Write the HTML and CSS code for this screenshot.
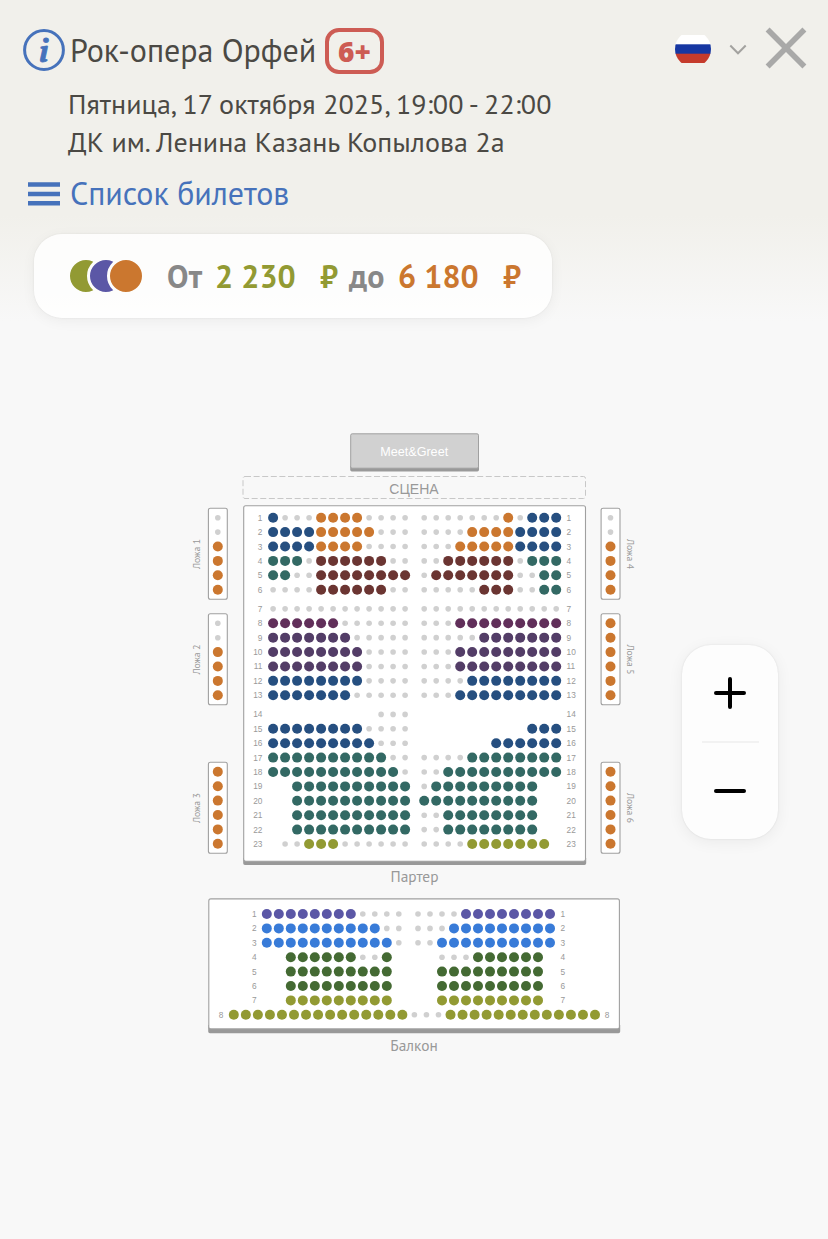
FILE: index.html
```html
<!DOCTYPE html>
<html lang="ru">
<head>
    <meta charset="UTF-8">
    <title>Рок-опера Орфей</title>
    <link rel="stylesheet" href="styles.css">
</head>
<body>

<!-- Шапка -->
<header class="header">
    <div class="title-row">
        <svg class="info-icon" width="42" height="42" viewBox="0 0 42 42">
            <circle cx="21" cy="21" r="19.4"/>
            <text x="20.8" y="33" text-anchor="middle">i</text>
        </svg>
        <h1 class="title">Рок-опера Орфей</h1>
        <span class="age">6+</span>
        <div class="tools">
            <svg class="flag" width="36" height="28" viewBox="0 0 36 28">
                <clipPath id="flagClip"><circle cx="18" cy="14" r="18"/></clipPath>
                <g clip-path="url(#flagClip)">
                    <rect width="36" height="10" fill="#fff"/>
                    <rect y="9.3" width="36" height="9.7" fill="#1637a2"/>
                    <rect y="18.7" width="36" height="9.3" fill="#c53b2c"/>
                </g>
            </svg>
            <svg class="chevron" width="18" height="12" viewBox="0 0 18 12">
                <path d="M1.3 1.5 L9 9.3 L16.7 1.5"/>
            </svg>
            <svg class="close" width="42" height="42" viewBox="0 0 42 42">
                <path d="M2.6 2.6 L39.4 39.4 M39.4 2.6 L2.6 39.4"/>
            </svg>
        </div>
    </div>
    <div class="details">
        <p>Пятница, 17 октября 2025, 19:00 - 22:00</p>
        <p>ДК им. Ленина Казань Копылова 2а</p>
    </div>
    <a class="tickets">
        <svg width="32" height="24" viewBox="0 0 32 24">
            <path d="M0 2.5 H32 M0 12 H32 M0 21.3 H32"/>
        </svg>
        <span>Список билетов</span>
    </a>
</header>

<!-- Диапазон цен -->
<div class="prices">
    <div class="dots">
        <i class="dot olive"></i>
        <i class="dot violet"></i>
        <i class="dot orange"></i>
    </div>
    <span class="word from">От</span>
    <span class="min">2 230</span>
    <span class="min rub">₽</span>
    <span class="word to">до</span>
    <span class="max">6 180</span>
    <span class="max rub">₽</span>
</div>

<!-- Схема зала -->
<main class="hall">
    <svg id="map" class="map" width="450" height="640" viewBox="190 425 450 640">
        <path class="shadow" d="M350.2 466 h128.8 v3.8 q0 1.7 -1.7 1.7 h-125.4 q-1.7 0 -1.7 -1.7 z"/>
        <rect class="meet" x="350.7" y="433.8" width="127.8" height="34.4" rx="1.5"/>
        <text class="meet-text" x="414.2" y="455.7">Meet&amp;Greet</text>
        <rect class="stage" x="243" y="476.5" width="342.5" height="22" rx="2"/>
        <text class="stage-text" x="414" y="494">СЦЕНА</text>

        <path class="shadow" d="M243.2 858 h343 v5.2 q0 1.8 -1.8 1.8 h-339.4 q-1.8 0 -1.8 -1.8 z"/>
        <rect class="box" x="243.7" y="505.7" width="341.8" height="355.5" rx="2"/>
        <text class="zone" x="414.5" y="882" textLength="48" lengthAdjust="spacingAndGlyphs">Партер</text>

        <path class="shadow" d="M208.2 1025 h412 v6.4 q0 1.8 -1.8 1.8 h-408.4 q-1.8 0 -1.8 -1.8 z"/>
        <rect class="box" x="208.8" y="898.9" width="410.6" height="130" rx="2"/>
        <text class="zone" x="414" y="1050.5" textLength="47.5" lengthAdjust="spacingAndGlyphs">Балкон</text>
    </svg>

    <!-- Масштаб -->
    <div class="zoom">
        <svg width="32" height="32" viewBox="0 0 32 32"><path d="M2 16 H30 M16 2 V30"/></svg>
        <hr>
        <svg width="32" height="32" viewBox="0 0 32 32"><path d="M2 16 H30"/></svg>
    </div>
</main>

<script src="script.js"></script>
</body>
</html>
```
FILE: styles.css
```css
* {
    box-sizing: border-box;
}

body {
    margin: 0;
    min-height: 1239px;
    font-family: "PT Sans", "Noto Sans", sans-serif;
    color: #4b4944;
    background: linear-gradient(#f1f0eb 0, #f1f0eb 215px, #f8f8f8 322px);
}

h1, p {
    margin: 0;
    font-weight: 400;
}

.header {
    height: 234px;
    padding: 28px 21px 0 23px;
}

.title-row {
    display: flex;
    align-items: center;
    height: 46px;
}

.info-icon {
    margin-top: -2px;
}

.info-icon circle {
    fill: none;
    stroke: #4672bb;
    stroke-width: 3;
}

.info-icon text {
    font: italic bold 31px "PT Serif", "DejaVu Serif", serif;
    fill: #4672bb;
    stroke: #4672bb;
    stroke-width: .8;
}

.title {
    width: 260px;
    margin-top: -2px;
    padding-left: 5px;
    font-size: 32px;
    line-height: 44px;
    letter-spacing: -.05px;
    white-space: nowrap;
}

.age {
    width: 59px;
    height: 46px;
    border: 4px solid #cd5c54;
    border-radius: 14px;
    color: #cd5c54;
    font: 800 28px/39px "Open Sans", sans-serif;
    text-align: center;
}

.tools {
    display: flex;
    align-items: center;
    margin-left: auto;
    margin-top: -6px;
}

.flag {
    margin-top: 2px;
}

.chevron {
    margin: 3px 18px 0 18px;
    fill: none;
    stroke: #a3a29f;
    stroke-width: 2;
}

.close {
    fill: none;
    stroke: #a9a9a8;
    stroke-width: 5.6;
}

.details {
    padding: 11px 0 0 45px;
    font-size: 28px;
    line-height: 38px;
    letter-spacing: .04px;
    white-space: nowrap;
}

.tickets {
    display: flex;
    align-items: center;
    gap: 10px;
    padding-left: 5px;
    height: 64px;
    color: #4672bb;
    font-size: 32px;
    line-height: 42px;
    letter-spacing: -.05px;
    white-space: nowrap;
}

.tickets svg {
    margin-top: 2px;
    stroke: #4672bb;
    stroke-width: 4.6;
}

.prices {
    display: flex;
    align-items: center;
    width: 518px;
    height: 84px;
    margin-left: 34px;
    padding-left: 33px;
    border-radius: 28px;
    background: rgba(255, 255, 255, .8);
    box-shadow: 0 0 2px rgba(0, 0, 0, .08), 0 3px 14px rgba(0, 0, 0, .05);
    font-size: 32px;
    font-weight: 700;
    white-space: nowrap;
}

.dots {
    display: flex;
    width: 100px;
}

.dot {
    flex: none;
    width: 38px;
    height: 38px;
    margin-right: -18px;
    border: 3px solid #fdfdfc;
    border-radius: 50%;
}

.word {
    color: #888;
}

.from {
    width: 48px;
}

.min {
    width: 105px;
    color: #929a33;
}

.max {
    width: 105px;
    color: #cb772f;
}

.prices .rub {
    width: 29px;
}

.to {
    width: 49px;
}

.olive {
    background: #929a33;
}

.violet {
    background: #5b57a6;
}

.orange {
    background: #cb772f;
}

.hall {
    display: flex;
    align-items: flex-start;
    padding: 107px 0 0 190px;
}

.map {
    flex: none;
    font-family: "Liberation Sans", Arial, sans-serif;
}

.map text {
    text-anchor: middle;
    fill: #999;
}

.box {
    fill: #fff;
    stroke: #a0a0a0;
    stroke-width: 1.1;
}

.shadow {
    fill: #999;
}

.meet {
    fill: #d1d1d1;
    stroke: #a0a0a0;
}

.map .meet-text {
    font-size: 12.6px;
    fill: #fff;
}

.stage {
    fill: none;
    stroke: #c8c8c8;
    stroke-dasharray: 6 2.6;
}

.map .stage-text {
    font-size: 14px;
}

.map .zone {
    font: 14.4px "PT Sans", "Noto Sans", sans-serif;
}

.map .loge {
    font: 9.5px "PT Sans", "Noto Sans", sans-serif;
}

.map .row {
    font-size: 8.3px;
}

.map .row-left {
    text-anchor: end;
}

.map .row-right {
    text-anchor: start;
}

.zoom {
    display: flex;
    flex-direction: column;
    align-items: center;
    justify-content: space-between;
    width: 96px;
    height: 194px;
    margin: 220px 0 0 42px;
    padding: 32px 0;
    border-radius: 29px;
    background: #fdfdfd;
    box-shadow: 0 0 2px rgba(0, 0, 0, .1), 0 3px 16px rgba(0, 0, 0, .06);
}

.zoom svg {
    stroke: #000;
    stroke-width: 4;
    stroke-linecap: round;
}

.zoom hr {
    width: 57px;
    margin: 0;
    border: 0;
    border-top: 2px solid #f2f2f2;
}
```
FILE: script.js
```js
const NS = "http://www.w3.org/2000/svg";
const map = document.getElementById("map");

// o - место занято, точка - пропуск
const colors = {
    o: "#d0d0d0",
    a: "#cb772f",
    b: "#264f80",
    t: "#336964",
    m: "#6b3532",
    w: "#612f5a",
    p: "#533d67",
    g: "#929a33",
    v: "#5b57a6",
    s: "#387bd8",
    f: "#446a33"
};

function add(tag, attrs, text) {
    const el = document.createElementNS(NS, tag);
    for (const key in attrs) el.setAttribute(key, attrs[key]);
    if (text) el.textContent = text;
    map.appendChild(el);
}

function seat(type, x, y) {
    if (type === ".") return;
    add("circle", { cx: x, cy: y, r: type === "o" ? 2.8 : 5, fill: colors[type] });
}

function seats(row, x, y, step) {
    [...row].forEach((type, i) => seat(type, x + i * step, y));
}

// Партер
const parterre = [
    ["boooaaaaoooo", "oooooooaobbb"],
    ["bbbbaaaaaooo", "ooooaaaabbbb"],
    ["bbbbaaaaoooo", "oooaaaaabbbb"],
    ["tttommmmmmoo", "oommmmmmottt"],
    ["ttoommmmmmmm", "ommmmmmmoott"],
    ["oooommmmmmoo", "ooooommmoott"],
    ["oooooooooooo", "oooooooooooo"],
    ["wwwwwwoooooo", "ooowwwwwwwww"],
    ["pppppppooooo", "oooooppppppp"],
    ["ppppppppoooo", "oooppppppppp"],
    ["ppppppppoooo", "oooppppppppp"],
    ["bbbbbbbboooo", "oooobbbbbbbb"],
    ["bbbbbbbooooo", "ooobbbbbbbbb"],
    [".........ooo", "............"],
    ["bbbbbbbboooo", ".........bbb"],
    ["bbbbbbbbbooo", "......bbbbbb"],
    ["ttttttttttoo", "oooo" + "tttttttt"],
    ["ttttttttttto", "oo" + "tttttttttt"],
    ["..tttttttttt", "ottttttttt.."],
    ["..tttttttttt", "tttttttttt.."],
    ["..tttttttttt", "ootttttttt.."],
    ["..tttttttttt", "ootttttttt.."],
    [".oogggoooooo", "ooooggggggg."]
];

parterre.forEach(([left, right], i) => {
    // проходы после 6 и 13 ряда
    const y = 517.7 + i * 14.4 + (i > 5 ? 4.75 : 0) + (i > 12 ? 4.75 : 0);
    seats(left, 273.1, y, 12);
    seats(right, 424.2, y, 12);
    add("text", { class: "row row-left", x: 262.4, y: y + 3 }, i + 1);
    add("text", { class: "row row-right", x: 566.6, y: y + 3 }, i + 1);
});

// Балкон
const balcony = [
    ["vvvvvvvvoooo", "oooovvvvvvvv"],
    ["ssssssssssoo", "ooosssssssss"],
    ["ssssssssssso", "oossssssssss"],
    ["..ffffffoof.", "..oooffffff."],
    ["..fffffffff.", "..fffffffff."],
    ["..fffffffff.", "..fffffffff."],
    ["..ggggggggg.", "..ggggggggg."]
];

balcony.forEach(([left, right], i) => {
    const y = 914 + i * 14.4;
    seats(left, 266.8, y, 12);
    seats(right, 418, y, 12);
    add("text", { class: "row", x: 254.2, y: y + 3 }, i + 1);
    add("text", { class: "row", x: 562.8, y: y + 3 }, i + 1);
});

seats("g".repeat(15) + "ooo" + "g".repeat(13), 233.8, 1014.7, 12.04);
add("text", { class: "row", x: 221, y: 1017.8 }, "8");
add("text", { class: "row", x: 607, y: 1017.8 }, "8");

// Ложи
const loges = [
    ["ooaaaa", 517.7], ["ooaaaa", 623.3], ["aaaaaa", 771.8],
    ["ooaaaa", 517.7], ["aaaaaa", 623.3], ["aaaaaa", 771.8]
];

loges.forEach(([row, y], i) => {
    const isLeft = i < 3;
    const x = isLeft ? 217.8 : 610.5;
    add("rect", { class: "box", x: x - 9.4, y: y - 9.5, width: 18.9, height: 91, rx: 2 });
    [...row].forEach((type, n) => seat(type, x, y + n * 14.4));
    const pos = isLeft ? `translate(200.2 ${y + 36.3}) rotate(-90)` : `translate(627.4 ${y + 36.3}) rotate(90)`;
    add("text", { class: "loge", transform: pos, textLength: 30, lengthAdjust: "spacingAndGlyphs" }, "Ложа " + (i + 1));
});
```
